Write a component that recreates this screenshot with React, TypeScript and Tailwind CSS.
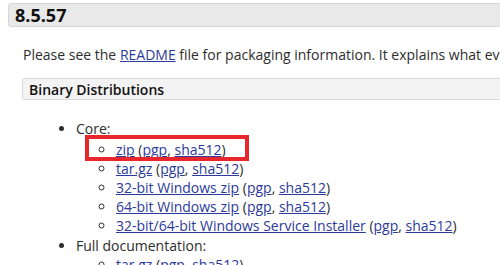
function Sub({ main }: { main: string }) {
  return (
    <li className="list-[circle] leading-[19px]">
      <a href="#" className="text-[#2b3a9b] underline">
        {main}
      </a>{" "}
      (<a href="#" className="text-[#2b3a9b] underline">pgp</a>,{" "}
      <a href="#" className="text-[#2b3a9b] underline">sha512</a>)
    </li>
  );
}

export default function App() {
  return (
    <div
      className="w-[500px] h-[265px] overflow-hidden bg-white text-[#2d2d2d] text-[14px]"
      style={{ fontFamily: '"Open Sans", sans-serif' }}
    >
      <div className="ml-2 mt-[3px] w-[520px] h-[24px] rounded-[3px] border border-[#d6d6d6] bg-[#e9e9e9] pl-[6px] flex items-center">
        <span className="text-[18px] font-bold text-[#111] whitespace-nowrap">8.5.57</span>
      </div>
      <p className="ml-[23px] mt-[17px] whitespace-nowrap">
        Please see the{" "}
        <a href="#" className="text-[#2b3a9b] underline">README</a> file for
        packaging information. It explains what every distribution contains.
      </p>
      <div className="ml-[22px] mt-[13px] w-[500px] h-[22px] rounded-[3px] border border-[#d9d9d9] bg-[#f3f3f3] pl-[6px] flex items-center">
        <span className="text-[14px] font-semibold text-[#111] whitespace-nowrap">Binary Distributions</span>
      </div>
      <ul className="mt-[19px] pl-[76px] list-disc whitespace-nowrap">
        <li className="leading-[19px]">
          Core:
          <ul className="pl-[40px] mt-[2px]">
            <li className="list-[circle] leading-[19px] relative">
              <span className="absolute -left-[31px] -top-[5px] w-[164px] h-[26px] border-4 border-[#e8262b]" />
              <a href="#" className="text-[#2b3a9b] underline">zip</a>{" "}
              (<a href="#" className="text-[#2b3a9b] underline">pgp</a>,{" "}
              <a href="#" className="text-[#2b3a9b] underline">sha512</a>)
            </li>
            <Sub main="tar.gz" />
            <Sub main="32-bit Windows zip" />
            <Sub main="64-bit Windows zip" />
            <Sub main="32-bit/64-bit Windows Service Installer" />
          </ul>
        </li>
        <li className="leading-[19px] mt-[1px]">
          Full documentation:
          <ul className="pl-[40px]">
            <Sub main="tar.gz" />
          </ul>
        </li>
      </ul>
    </div>
  );
}
